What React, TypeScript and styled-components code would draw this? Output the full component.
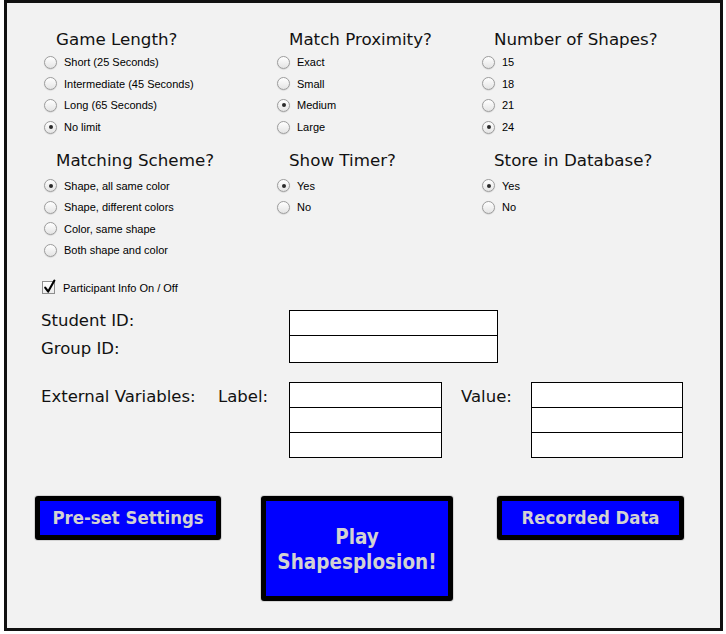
import React from "react";
import styled, { createGlobalStyle } from "styled-components";

const GlobalStyle = createGlobalStyle`
  html, body { margin: 0; padding: 0; background: #ffffff; }
  body { font-family: "DejaVu Sans", Verdana, sans-serif; }
`;

const Frame = styled.div`
  box-sizing: border-box;
  width: 719px;
  height: 631px;
  margin-left: 4px;
  border: 3px solid #111;
  background: #f2f2f2;
  display: flex;
  flex-direction: column;
`;

const Options = styled.div`
  display: grid;
  grid-template-columns: 233px 205px 1fr;
  row-gap: 11px;
  padding: 25px 0 0 37px;
`;

const Group = styled.div``;

const Heading = styled.div<{ $space: number }>`
  font-family: "DejaVu Sans", Verdana, sans-serif;
  font-size: 16.7px;
  line-height: 22px;
  color: #111;
  padding-left: 12px;
  margin-bottom: ${(p) => p.$space}px;
  white-space: nowrap;
`;

const Option = styled.label`
  display: flex;
  align-items: center;
  gap: 7px;
  height: 21.6px;
  font-family: "Liberation Sans", Arial, sans-serif;
  font-size: 11px;
  color: #000;
  white-space: nowrap;
`;

const Radio = styled.span<{ $on?: boolean }>`
  box-sizing: border-box;
  flex: none;
  width: 13px;
  height: 13px;
  border-radius: 50%;
  border: 1px solid #9d9d9d;
  background: linear-gradient(#ffffff, #e4e4e4);
  box-shadow: 0 0.5px 1px rgba(0, 0, 0, 0.18);
  display: flex;
  align-items: center;
  justify-content: center;

  &::after {
    content: "";
    width: 4px;
    height: 4px;
    border-radius: 50%;
    background: #2a2a2a;
    display: ${(p) => (p.$on ? "block" : "none")};
  }
`;

const CheckRow = styled.label`
  display: flex;
  align-items: center;
  gap: 8px;
  height: 21.6px;
  margin-top: 15.5px;
  padding-left: 35px;
  font-family: "Liberation Sans", Arial, sans-serif;
  font-size: 11px;
  color: #000;
`;

const CheckBox = styled.span`
  box-sizing: border-box;
  position: relative;
  flex: none;
  width: 13px;
  height: 13px;
  border: 1px solid #8e8e8e;
  background: linear-gradient(#ffffff, #ececec);

  svg {
    position: absolute;
    left: 0px;
    top: -3px;
  }
`;

const IdSection = styled.div`
  display: grid;
  grid-template-columns: 248px 209px;
  margin-top: 8.5px;
  padding-left: 34px;
`;

const LabelStack = styled.div`
  font-family: "DejaVu Sans", Verdana, sans-serif;
  font-size: 16.5px;
  line-height: 28px;
  color: #111;
`;

const InputStack = styled.div<{ $top?: number }>`
  box-sizing: border-box;
  border: 1px solid #000;
  background: #fff;
  margin-top: ${(p) => p.$top || 0}px;
`;

const Field = styled.input`
  display: block;
  box-sizing: border-box;
  width: 100%;
  height: 25px;
  margin: 0;
  padding: 0 4px;
  border: none;
  border-top: 1px solid #000;
  background: #fff;
  outline: none;

  &:first-child {
    height: 24px;
    border-top: none;
  }
`;

const ExtSection = styled.div`
  display: grid;
  grid-template-columns: 177px 71px 153px 89px 152px;
  align-items: start;
  margin-top: 19px;
  padding-left: 34px;
`;

const ExtText = styled.div<{ $indent?: number }>`
  font-family: "DejaVu Sans", Verdana, sans-serif;
  font-size: 16.5px;
  line-height: 25px;
  padding-top: 2px;
  padding-left: ${(p) => p.$indent || 0}px;
  color: #111;
  white-space: nowrap;
`;

const ButtonRow = styled.div`
  display: flex;
  align-items: flex-start;
  column-gap: 40px;
  margin-top: 38px;
  padding-left: 28px;
`;

const BigButton = styled.button<{ $w: number; $h: number; $size?: number; $shift?: number; $drop?: number }>`
  box-sizing: border-box;
  width: ${(p) => p.$w}px;
  height: ${(p) => p.$h}px;
  margin-left: ${(p) => p.$shift || 0}px;
  padding: ${(p) => p.$drop || 0}px 0 0;
  border: 5px solid #000;
  border-radius: 3px;
  box-shadow: 0 0 0 1px rgba(0, 0, 0, 0.12);
  background: #0000ff;
  color: #d2d2d2;
  font-family: "DejaVu Sans Condensed", "DejaVu Sans", sans-serif;
  font-weight: bold;
  font-size: ${(p) => p.$size || 18.4}px;
  line-height: 24.5px;
  text-align: center;
  cursor: pointer;
`;

type Group = { title: string; options: string[]; selected: number };

const rows: { space: number; groups: Group[] }[] = [
  {
    space: 1.5,
    groups: [
      {
        title: "Game Length?",
        options: ["Short (25 Seconds)", "Intermediate (45 Seconds)", "Long (65 Seconds)", "No limit"],
        selected: 3,
      },
      { title: "Match Proximity?", options: ["Exact", "Small", "Medium", "Large"], selected: 2 },
      { title: "Number of Shapes?", options: ["15", "18", "21", "24"], selected: 3 },
    ],
  },
  {
    space: 4,
    groups: [
      {
        title: "Matching Scheme?",
        options: ["Shape, all same color", "Shape, different colors", "Color, same shape", "Both shape and color"],
        selected: 0,
      },
      { title: "Show Timer?", options: ["Yes", "No"], selected: 0 },
      { title: "Store in Database?", options: ["Yes", "No"], selected: 0 },
    ],
  },
];

const App: React.FC = () => {
  return (
    <>
      <GlobalStyle />
      <Frame>
        <Options>
          {rows.map((row) =>
            row.groups.map((g) => (
              <Group key={g.title}>
                <Heading $space={row.space}>{g.title}</Heading>
                {g.options.map((o, i) => (
                  <Option key={o}>
                    <Radio $on={i === g.selected} />
                    {o}
                  </Option>
                ))}
              </Group>
            ))
          )}
        </Options>

        <CheckRow>
          <CheckBox>
            <svg width="14" height="15" viewBox="0 0 14 15">
              <path d="M2.2 8.6 L5.2 12.6 L11.4 1.6" fill="none" stroke="#000" strokeWidth="2.1" strokeLinecap="round" strokeLinejoin="round" />
            </svg>
          </CheckBox>
          Participant Info On / Off
        </CheckRow>

        <IdSection>
          <LabelStack>
            <div>Student ID:</div>
            <div>Group ID:</div>
          </LabelStack>
          <InputStack $top={3}>
            <Field />
            <Field />
          </InputStack>
        </IdSection>

        <ExtSection>
          <ExtText>External Variables:</ExtText>
          <ExtText>Label:</ExtText>
          <InputStack>
            <Field />
            <Field />
            <Field />
          </InputStack>
          <ExtText $indent={19}>Value:</ExtText>
          <InputStack>
            <Field />
            <Field />
            <Field />
          </InputStack>
        </ExtSection>

        <ButtonRow>
          <BigButton $w={186} $h={44}>Pre-set Settings</BigButton>
          <BigButton $w={192} $h={105} $size={20.5} $drop={3}>
            Play
            <br />
            Shapesplosion!
          </BigButton>
          <BigButton $w={187} $h={44} $shift={4}>Recorded Data</BigButton>
        </ButtonRow>
      </Frame>
    </>
  );
};

export default App;
